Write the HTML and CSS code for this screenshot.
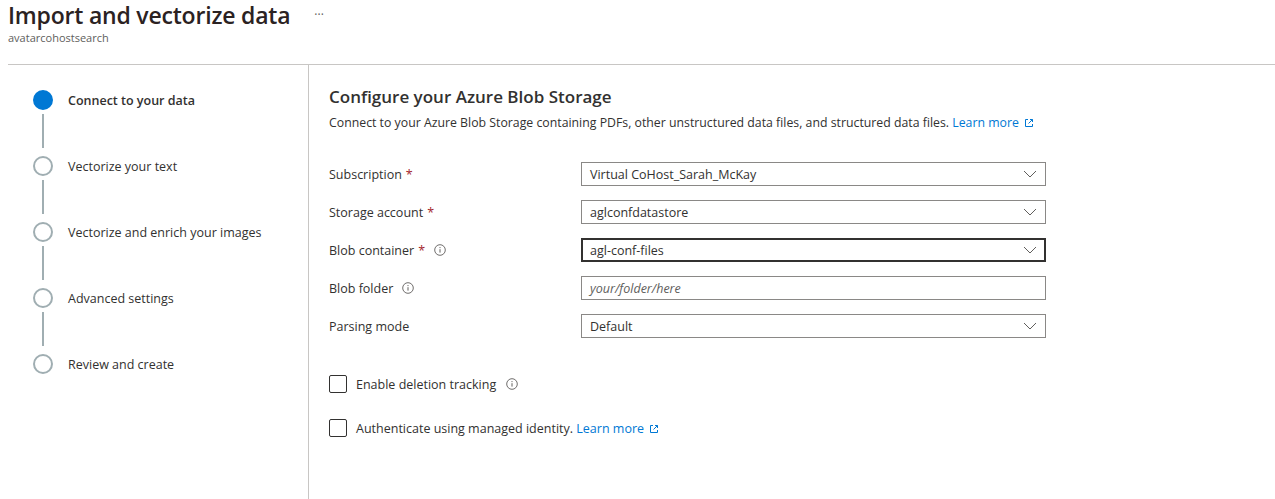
FILE: index.html
```html
<!DOCTYPE html>
<html lang="en">
<head>
<meta charset="utf-8">
<title>Import and vectorize data</title>
<link rel="stylesheet" href="styles.css">
</head>
<body>
<header class="page-header">
  <div class="title-row">
    <h1 class="title">Import and vectorize data</h1>
    <span class="more">···</span>
  </div>
  <div class="subtitle">avatarcohostsearch</div>
</header>
<div class="layout">
  <nav class="steps">
    <div class="step active">
      <div class="marker"><span class="dot"></span><span class="line"></span></div>
      <span class="step-label">Connect to your data</span>
    </div>
    <div class="step">
      <div class="marker"><span class="dot"></span><span class="line"></span></div>
      <span class="step-label">Vectorize your text</span>
    </div>
    <div class="step">
      <div class="marker"><span class="dot"></span><span class="line"></span></div>
      <span class="step-label">Vectorize and enrich your images</span>
    </div>
    <div class="step">
      <div class="marker"><span class="dot"></span><span class="line"></span></div>
      <span class="step-label">Advanced settings</span>
    </div>
    <div class="step last">
      <div class="marker"><span class="dot"></span></div>
      <span class="step-label">Review and create</span>
    </div>
  </nav>
  <main class="content">
    <h2 class="heading">Configure your Azure Blob Storage</h2>
    <p class="desc">Connect to your Azure Blob Storage containing PDFs, other unstructured data files, and structured data files. <a class="link" href="#">Learn more <svg class="ext" viewBox="0 0 10 10" width="10" height="10"><path d="M4 1.5H1.5v7h7V6" fill="none" stroke="currentColor" stroke-width="1"/><path d="M6 1.5h2.5V4M8.5 1.5L4.5 5.5" fill="none" stroke="currentColor" stroke-width="1"/></svg></a></p>
    <div class="form">
      <div class="row">
        <label class="label">Subscription <span class="req">*</span></label>
        <div class="field select"><span>Virtual CoHost_Sarah_McKay</span><svg class="chev" viewBox="0 0 14 8" width="14" height="8"><path d="M1 1l6 6 6-6" fill="none" stroke="#605e5c" stroke-width="1"/></svg></div>
      </div>
      <div class="row">
        <label class="label">Storage account <span class="req">*</span></label>
        <div class="field select"><span>aglconfdatastore</span><svg class="chev" viewBox="0 0 14 8" width="14" height="8"><path d="M1 1l6 6 6-6" fill="none" stroke="#605e5c" stroke-width="1"/></svg></div>
      </div>
      <div class="row">
        <label class="label">Blob container <span class="req">*</span><svg class="info" viewBox="0 0 12 12" width="12" height="12"><circle cx="6" cy="6" r="5.3" fill="none" stroke="#605e5c" stroke-width="0.9"/><path d="M6 5.2v3.4" stroke="#605e5c" stroke-width="1"/><circle cx="6" cy="3.6" r="0.6" fill="#605e5c"/></svg></label>
        <div class="field select focused"><span>agl-conf-files</span><svg class="chev" viewBox="0 0 14 8" width="14" height="8"><path d="M1 1l6 6 6-6" fill="none" stroke="#605e5c" stroke-width="1"/></svg></div>
      </div>
      <div class="row">
        <label class="label">Blob folder<svg class="info" viewBox="0 0 12 12" width="12" height="12"><circle cx="6" cy="6" r="5.3" fill="none" stroke="#605e5c" stroke-width="0.9"/><path d="M6 5.2v3.4" stroke="#605e5c" stroke-width="1"/><circle cx="6" cy="3.6" r="0.6" fill="#605e5c"/></svg></label>
        <div class="field"><span class="placeholder">your/folder/here</span></div>
      </div>
      <div class="row">
        <label class="label">Parsing mode</label>
        <div class="field select"><span>Default</span><svg class="chev" viewBox="0 0 14 8" width="14" height="8"><path d="M1 1l6 6 6-6" fill="none" stroke="#605e5c" stroke-width="1"/></svg></div>
      </div>
    </div>
    <div class="checks">
      <div class="check">
        <span class="box"></span>
        <span class="check-label">Enable deletion tracking</span>
        <svg class="info" viewBox="0 0 12 12" width="12" height="12"><circle cx="6" cy="6" r="5.3" fill="none" stroke="#605e5c" stroke-width="0.9"/><path d="M6 5.2v3.4" stroke="#605e5c" stroke-width="1"/><circle cx="6" cy="3.6" r="0.6" fill="#605e5c"/></svg>
      </div>
      <div class="check">
        <span class="box"></span>
        <span class="check-label">Authenticate using managed identity. <a class="link" href="#">Learn more <svg class="ext" viewBox="0 0 10 10" width="10" height="10"><path d="M4 1.5H1.5v7h7V6" fill="none" stroke="currentColor" stroke-width="1"/><path d="M6 1.5h2.5V4M8.5 1.5L4.5 5.5" fill="none" stroke="currentColor" stroke-width="1"/></svg></a></span>
      </div>
    </div>
  </main>
</div>
</body>
</html>
```

FILE: styles.css
```css
* { box-sizing: border-box; }
html, body { margin: 0; padding: 0; background: #fff; }
body {
  font-family: "Open Sans", "Noto Sans", "Liberation Sans", sans-serif;
  color: #323130;
  font-size: 13px;
  height: 499px;
  overflow: hidden;
  display: flex;
  flex-direction: column;
}
.page-header { padding: 0 0 0 8px; height: 64px; }
.title-row { display: flex; align-items: flex-start; gap: 24px; }
.title {
  margin: 0;
  font-size: 23px;
  font-weight: 600;
  line-height: 30px;
  color: #2b2222;
  letter-spacing: -0.2px;
}
.more { color: #605e5c; font-size: 12px; line-height: 30px; letter-spacing: 0; }
.subtitle { font-size: 11px; color: #605e5c; line-height: 14px; margin-top: 1px; }
.layout {
  flex: 1;
  display: flex;
  margin-left: 8px;
  border-top: 1px solid #c8c6c4;
}
.steps {
  width: 301px;
  flex: none;
  border-right: 1px solid #c8c6c4;
  padding: 25px 0 0 25px;
}
.step { display: flex; gap: 15px; align-items: flex-start; }
.marker { width: 20px; display: flex; flex-direction: column; align-items: center; }
.dot {
  width: 20px; height: 20px; border-radius: 50%;
  border: 2px solid #a0aeb2;
  background: #fff;
}
.step.active .dot { background: #0078d4; border-color: #0078d4; }
.line { width: 2px; height: 34px; background: #a0aeb2; margin: 4px 0 8px; }
.step-label { line-height: 22px; color: #323130; font-size: 12.5px; }
.step.active .step-label { font-weight: 600; }
.content { flex: 1; padding: 20px 0 0 20px; }
.heading { margin: 0; font-size: 17px; font-weight: 600; line-height: 24px; color: #323130; }
.desc { margin: 6px 0 0; font-size: 12.3px; line-height: 16px; }
.link { color: #0078d4; text-decoration: none; }
.ext { vertical-align: -1px; margin-left: 2px; }
.form { margin-top: 31px; display: flex; flex-direction: column; gap: 14px; }
.row { display: flex; align-items: center; }
.label { width: 252px; flex: none; display: flex; align-items: center; font-size: 12.5px; }
.req { color: #a4262c; margin-left: 4px; }
.info { margin-left: 9px; }
.field {
  width: 465px; height: 24px;
  border: 1px solid #8a8886;
  display: flex; align-items: center; justify-content: space-between;
  padding: 0 8px 0 8px;
  font-size: 12.5px;
}
.field.focused { border: 2px solid #323130; padding-left: 7px; padding-right: 7px; }
.placeholder { font-style: italic; color: #605e5c; }
.chev { margin-right: 0; }
.checks { margin-top: 37px; display: flex; flex-direction: column; gap: 26px; }
.check { display: flex; align-items: center; }
.box { width: 18px; height: 18px; border: 1px solid #323130; border-radius: 2px; margin-right: 9px; }
.check-label { font-size: 12.5px; }
.check .info { margin-left: 10px; }
```
